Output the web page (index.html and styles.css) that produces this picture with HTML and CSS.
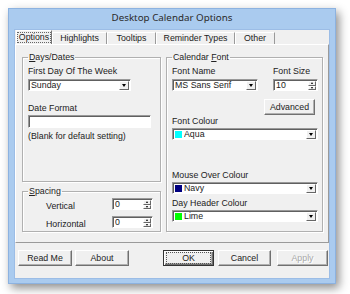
FILE: index.html
```html
<!DOCTYPE html>
<html>
<head>
<meta charset="utf-8">
<link rel="stylesheet" href="styles.css">
</head>
<body>
<div class="window">
  <div class="titlebar">Desktop Calendar Options</div>
  <div class="client">
    <div class="tabs">
      <div class="tab active w-options"><span class="focus">Options</span></div>
      <div class="tab w-high">Highlights</div>
      <div class="tab w-tips">Tooltips</div>
      <div class="tab w-rem">Reminder Types</div>
      <div class="tab w-other">Other</div>
    </div>
    <div class="pane">
      <div class="leftcol">
        <fieldset class="group days">
          <legend><u>D</u>ays/Dates</legend>
          <div class="lbl mt4">First Day Of The Week</div>
          <div class="combo mt3 w103"><span class="val">Sunday</span><span class="drop"></span></div>
          <div class="lbl mt12">Date Format</div>
          <div class="field mt2 w123"></div>
          <div class="lbl mt3">(Blank for default setting)</div>
        </fieldset>
        <fieldset class="group spacing">
          <legend><u>S</u>pacing</legend>
          <div class="srow mt2"><span class="slbl">Vertical</span><div class="spin w41"><span class="val">0</span><span class="arrows"><span class="up"></span><span class="dn"></span></span></div></div>
          <div class="srow mt6"><span class="slbl">Horizontal</span><div class="spin w41"><span class="val">0</span><span class="arrows"><span class="up"></span><span class="dn"></span></span></div></div>
        </fieldset>
      </div>
      <fieldset class="group font">
        <legend>Calendar <u>F</u>ont</legend>
        <div class="fgrid mt4">
          <div class="lbl">Font Name</div>
          <div class="lbl">Font Size</div>
          <div class="combo"><span class="val">MS Sans Serif</span><span class="drop"></span></div>
          <div class="spin"><span class="val">10</span><span class="arrows"><span class="up"></span><span class="dn"></span></span></div>
        </div>
        <div class="advrow"><div class="btn adv">Advanced</div></div>
        <div class="lbl mt1">Font Colour</div>
        <div class="combo mt2"><span class="sw aqua"></span><span class="val">Aqua</span><span class="drop"></span></div>
        <div class="lbl mt30">Mouse Over Colour</div>
        <div class="combo mt2"><span class="sw navy"></span><span class="val">Navy</span><span class="drop"></span></div>
        <div class="lbl mt4">Day Header Colour</div>
        <div class="combo mt2"><span class="sw lime"></span><span class="val">Lime</span><span class="drop"></span></div>
      </fieldset>
    </div>
    <div class="buttons">
      <div class="btn b-readme">Read Me</div>
      <div class="btn b-about">About</div>
      <div class="btn default b-ok"><span class="focus">OK</span></div>
      <div class="btn b-cancel">Cancel</div>
      <div class="btn disabled b-apply">Apply</div>
    </div>
  </div>
</div>
</body>
</html>
```

FILE: styles.css
```css
* { box-sizing: border-box; }
html, body { margin: 0; padding: 0; }
body {
  width: 350px;
  height: 294px;
  background: #ffffff;
  font-family: "Liberation Sans", Arial, sans-serif;
  font-size: 8.8px;
  color: #222;
  overflow: hidden;
}
.window {
  margin: 8px 0 0 8px;
  width: 328px;
  height: 276px;
  background: #aacbef;
  border: 1px solid #8cb2e0;
  padding: 0 5px 4px 5px;
  box-shadow: 3px 4px 9px rgba(0, 0, 0, 0.45);
  display: flex;
  flex-direction: column;
}
.titlebar {
  height: 20px;
  line-height: 17px;
  text-align: center;
  font-family: "Noto Sans", sans-serif;
  font-size: 9.8px;
  color: #2a2a2a;
}
.client {
  flex: 1;
  background: #f0f0f0;
  border: 1px solid #9cbde6;
  display: flex;
  flex-direction: column;
}
.tabs {
  display: flex;
  height: 14px;
  padding-left: 1px;
}
.tab {
  height: 12px;
  margin-top: 2px;
  border-left: 1px solid #fff;
  border-top: 1px solid #fff;
  border-right: 1px solid #9a9a9a;
  line-height: 10px;
  text-align: center;
  white-space: nowrap;
}
.tab.active {
  height: 14px;
  margin-top: 0;
  line-height: 12px;
  border-color: #fff #777 #777 #fff;
}
.tab .focus {
  display: inline-block;
  outline: 1px dotted #666;
  line-height: 9px;
  padding: 0 1px;
}
.w-options { width: 36px; }
.w-high { width: 55px; }
.w-tips { width: 49px; }
.w-rem { width: 79px; }
.w-other { width: 40px; }
.pane {
  width: 314px;
  height: 199px;
  border: 1px solid;
  border-color: #fff #9a9a9a #9a9a9a #fff;
  display: flex;
  gap: 5px;
  padding: 7px 5px 0 6px;
}
.leftcol {
  width: 139px;
  display: flex;
  flex-direction: column;
  gap: 4px;
}
.group {
  margin: 0;
  min-width: 0;
  border: 1px solid #b0b0b0;
  box-shadow: inset 1px 1px 0 #fff, 1px 1px 0 #fff;
  padding: 0 4px 0 5px;
}
.group legend {
  padding: 0 1px;
  line-height: 10px;
  height: 10px;
}
.group legend u { text-decoration: underline; text-underline-offset: 1px; }
.days { height: 130px; }
.spacing { height: 46px; }
.font { width: 157px; height: 180px; }
.lbl { line-height: 10px; height: 10px; white-space: nowrap; }
.mt1 { margin-top: 1px; }
.mt2 { margin-top: 2px; }
.mt3 { margin-top: 3px; }
.mt4 { margin-top: 4px; }
.mt6 { margin-top: 6px; }
.mt12 { margin-top: 12px; }
.mt30 { margin-top: 30px; }
.w103 { width: 103px; }
.w123 { width: 123px; }
.w41 { width: 41px; }
.combo, .spin, .field {
  display: flex;
  align-items: center;
  height: 12px;
  background: #fff;
  border: 1px solid;
  border-color: #999 #fff #fff #999;
  box-shadow: inset 1px 1px 0 #606060;
  padding: 1px 1px 0 2px;
}
.field { height: 13px; }
.val { flex: 1; line-height: 9px; white-space: nowrap; overflow: hidden; }
.drop {
  width: 10px;
  height: 9px;
  background: #f0f0f0;
  border: 1px solid;
  border-color: #fff #666 #666 #fff;
  display: flex;
  align-items: center;
  justify-content: center;
}
.drop::after {
  content: "";
  border-left: 2.5px solid transparent;
  border-right: 2.5px solid transparent;
  border-top: 3px solid #000;
}
.sw {
  width: 7px;
  height: 7px;
  margin-right: 2px;
  flex: none;
}
.aqua { background: #00ffff; }
.navy { background: #000080; }
.lime { background: #00ff00; }
.arrows {
  width: 8px;
  height: 9px;
  display: flex;
  flex-direction: column;
}
.arrows span {
  flex: 1;
  background: #f0f0f0;
  border: 1px solid;
  border-color: #fff #666 #666 #fff;
  display: flex;
  align-items: center;
  justify-content: center;
}
.arrows .up::after {
  content: "";
  border-left: 1.5px solid transparent;
  border-right: 1.5px solid transparent;
  border-bottom: 2px solid #000;
}
.arrows .dn::after {
  content: "";
  border-left: 1.5px solid transparent;
  border-right: 1.5px solid transparent;
  border-top: 2px solid #000;
}
.srow {
  display: flex;
  align-items: center;
  height: 12px;
}
.slbl {
  width: 66px;
  margin-left: 18px;
  padding-top: 3px;
  line-height: 10px;
}
.fgrid {
  display: grid;
  grid-template-columns: 86px 45px;
  column-gap: 15px;
  grid-template-rows: 10px 12px;
  row-gap: 3px;
}
.advrow {
  display: flex;
  justify-content: flex-end;
  padding-right: 3px;
  margin-top: 8px;
}
.btn {
  height: 16px;
  background: #f0f0f0;
  border: 1px solid;
  border-color: #fff #707070 #707070 #fff;
  box-shadow: inset -1px -1px 0 #b0b0b0;
  display: flex;
  align-items: center;
  justify-content: center;
  white-space: nowrap;
}
.adv { width: 51px; }
.buttons {
  display: flex;
  margin-top: 7px;
  padding-left: 3px;
}
.b-readme { width: 54px; }
.b-about { width: 54px; margin-left: 3px; }
.b-ok { width: 51px; margin-left: 34px; }
.b-cancel { width: 53px; margin-left: 4px; }
.b-apply { width: 51px; margin-left: 6px; }
.btn.default {
  border: 1px solid #333;
  box-shadow: inset 1px 1px 0 #fff, inset -1px -1px 0 #707070, inset -2px -2px 0 #b0b0b0;
}
.btn .focus {
  outline: 1px dotted #555;
  width: 43px;
  height: 10px;
  line-height: 10px;
  text-align: center;
}
.btn.disabled { color: #a8a8a8; text-shadow: 1px 1px 0 #fff; }
```
